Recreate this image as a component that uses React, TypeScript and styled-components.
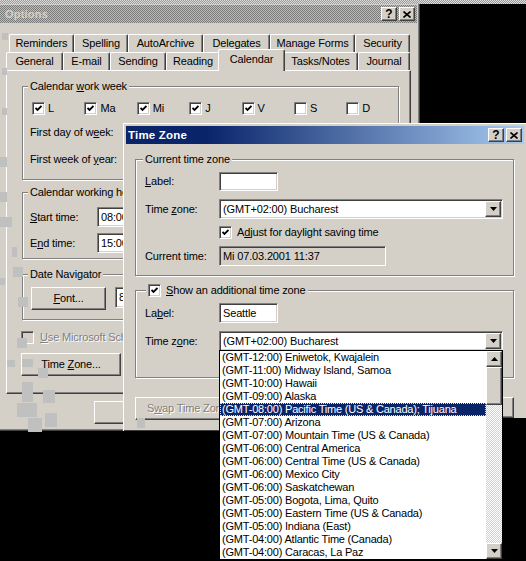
import React from "react";
import styled, { createGlobalStyle, css } from "styled-components";

const face = "#d4d0c8";
const shadow = "#808080";
const dark = "#404040";

const GlobalStyle = createGlobalStyle`
  html, body { margin: 0; padding: 0; background: #000; }
  * { box-sizing: border-box; }
`;

const checker = (a: string, b: string) => css`
  background-image: repeating-conic-gradient(${a} 0 25%, ${b} 0 50%);
  background-size: 2px 2px;
`;

const raised = css`
  border: 1px solid;
  border-color: #fff ${dark} ${dark} #fff;
  box-shadow: inset -1px -1px ${shadow};
  background: ${face};
`;

const sunken = css`
  border: 1px solid;
  border-color: ${shadow} #fff #fff ${shadow};
  box-shadow: inset 1px 1px ${dark}, inset -1px -1px ${face};
`;

const Screen = styled.div`
  position: relative;
  width: 526px;
  height: 561px;
  overflow: hidden;
  background: #000;
  font-family: "Liberation Sans", Arial, sans-serif;
  font-size: 11px;
  line-height: 13px;
  letter-spacing: -0.15px;
  color: #000;
`;

const BackStrip = styled.div`
  height: 4px;
  ${checker("#9a9a9a", "#dcdcdc")}
`;

const OptionsWindow = styled.div`
  display: flex;
  flex-direction: column;
  width: 420px;
  height: 427px;
  background: ${face};
  box-shadow: inset -1px -1px ${dark}, inset -2px -2px ${shadow};
`;

const TitleBar = styled.div<{ $active?: boolean }>`
  display: flex;
  align-items: center;
  flex: none;
  height: 18px;
  padding: 0 2px 0 5px;
  font-weight: bold;
  letter-spacing: 0.2px;
  ${(p) =>
    p.$active
      ? css`
          background: linear-gradient(90deg, #0a246a 0%, #0a246a 20%, #a6caf0 100%);
          color: #fff;
        `
      : css`
          ${checker("#7a7a7a", "#bdbdbd")}
          color: ${face};
        `}
`;

const OptionsTitle = styled(TitleBar)`
  margin: 1px 3px 0 0;
`;

const TitleButtons = styled.div`
  display: flex;
  gap: 2px;
  margin-left: auto;
`;

const TitleButton = styled.div`
  ${raised}
  width: 16px;
  height: 14px;
  display: flex;
  align-items: center;
  justify-content: center;
  color: #000;
  font-size: 12px;
  font-weight: bold;
`;

const OptionsBody = styled.div`
  display: flex;
  flex-direction: column;
  padding: 11px 0 0 6px;
`;

const TabRow = styled.div<{ $indent: number }>`
  display: flex;
  height: 18px;
  margin-left: ${(p) => p.$indent}px;
`;

const Tab = styled.div<{ $w: number; $selected?: boolean }>`
  flex: none;
  width: ${(p) => p.$w}px;
  height: 18px;
  display: flex;
  align-items: center;
  justify-content: center;
  padding-bottom: 1px;
  background: ${face};
  border-top: 1px solid #fff;
  border-left: 1px solid #fff;
  border-right: 1px solid ${dark};
  border-radius: 2px 2px 0 0;
  box-shadow: inset -1px 0 ${shadow};
  white-space: nowrap;
  ${(p) =>
    p.$selected &&
    css`
      position: relative;
      z-index: 1;
      width: ${p.$w + 4}px;
      height: 22px;
      margin: -3px -2px -1px;
      padding-bottom: 3px;
    `}
`;

const Panel = styled.div`
  display: flex;
  flex-direction: column;
  align-items: flex-start;
  width: 405px;
  height: 324px;
  padding: 15px 0 0 15px;
  border: 1px solid;
  border-color: #fff ${dark} ${dark} #fff;
  box-shadow: inset -1px -1px ${shadow};
`;

const Group = styled.div<{ $w: number; $h: number; $mt?: number }>`
  position: relative;
  flex: none;
  width: ${(p) => p.$w}px;
  height: ${(p) => p.$h}px;
  margin-top: ${(p) => p.$mt ?? 0}px;
  border: 1px solid ${shadow};
  box-shadow: inset 1px 1px #fff, 1px 1px #fff;
`;

const Legend = styled.div<{ $left: number }>`
  position: absolute;
  top: -7px;
  left: ${(p) => p.$left}px;
  display: flex;
  align-items: center;
  gap: 5px;
  padding: 0 2px;
  background: ${face};
  white-space: nowrap;
`;

const U = styled.span`
  text-decoration: underline;
  text-underline-offset: 1px;
`;

const Disabled = styled.span`
  color: ${shadow};
  text-shadow: 1px 1px #fff;
`;

const CheckBox = styled.span<{ $disabled?: boolean }>`
  ${sunken}
  flex: none;
  display: inline-flex;
  align-items: center;
  justify-content: center;
  width: 13px;
  height: 13px;
  background: ${(p) => (p.$disabled ? face : "#fff")};
`;

const Check = ({ on, disabled }: { on?: boolean; disabled?: boolean }) => (
  <CheckBox $disabled={disabled}>
    {on && (
      <svg width="7" height="7" viewBox="0 0 7 7">
        <path d="M0.5 3 L2.5 5 L6.5 1" stroke="#000" strokeWidth="1.8" fill="none" />
      </svg>
    )}
  </CheckBox>
);

const CheckItem = styled.label<{ $gap?: number }>`
  display: flex;
  align-items: center;
  gap: ${(p) => p.$gap ?? 3}px;
  white-space: nowrap;
`;

const DayRow = styled.div`
  display: grid;
  grid-template-columns: repeat(7, 52.4px);
  height: 13px;
  margin: 15px 0 0 9px;
`;

const FieldRows = styled.div<{ $top: number; $gap: number; $h: number }>`
  display: grid;
  grid-auto-rows: ${(p) => p.$h}px;
  row-gap: ${(p) => p.$gap}px;
  padding: ${(p) => p.$top}px 0 0 7px;
`;

const FieldRow = styled.div`
  display: grid;
  grid-template-columns: 67px auto;
  align-items: center;
  white-space: nowrap;
`;

const TextBox = styled.div<{ $w: number; $h?: number; $grey?: boolean }>`
  ${sunken}
  width: ${(p) => p.$w}px;
  height: ${(p) => p.$h ?? 20}px;
  padding: 0 3px;
  display: flex;
  align-items: center;
  white-space: nowrap;
  overflow: hidden;
  background: ${(p) => (p.$grey ? face : "#fff")};
`;

const Button = styled.div<{ $w: number; $h?: number }>`
  ${raised}
  flex: none;
  width: ${(p) => p.$w}px;
  height: ${(p) => p.$h ?? 23}px;
  display: flex;
  align-items: center;
  justify-content: center;
  white-space: nowrap;
  box-shadow: inset -1px -1px ${shadow}, inset 1px 1px ${face};
`;

const NavRow = styled.div`
  display: flex;
  align-items: flex-start;
  gap: 9px;
  padding: 12px 0 0 8px;
`;

const SoloCheck = styled(CheckItem)`
  margin: 11px 0 0 -1px;
  height: 13px;
`;

const TimeZoneButton = styled(Button)`
  margin: 9px 0 0 -1px;
`;

const DialogButtons = styled.div`
  display: flex;
  gap: 6px;
  padding: 7px 0 0 88px;
`;

/* ---- Time Zone dialog ---- */

const Dialog = styled.div`
  position: absolute;
  left: 123px;
  top: 123px;
  width: 404px;
  height: 308px;
  display: flex;
  flex-direction: column;
  padding: 3px 3px 0;
  background: ${face};
  box-shadow: inset 1px 1px #fff, inset -1px -1px ${dark};
`;

/* the capture lost the lower right corner of the dialog */
const CaptureGap = styled.div`
  position: absolute;
  left: 503px;
  top: 418px;
  width: 23px;
  height: 14px;
  background: #000;
`;

const DialogTitle = styled(TitleBar)`
  padding-left: 2px;
  font-size: 11.5px;
`;

const DialogBody = styled.div`
  display: flex;
  flex-direction: column;
  padding: 15px 0 0 9px;
`;

const TzRows = styled.div<{ $rows: string; $top: number; $gap: number }>`
  display: grid;
  grid-template-columns: 74px auto;
  grid-template-rows: ${(p) => p.$rows};
  row-gap: ${(p) => p.$gap}px;
  align-items: center;
  padding: ${(p) => p.$top}px 0 0 9px;
  white-space: nowrap;
`;

const Span2 = styled.div`
  grid-column: 2;
`;

const SelectWrap = styled.div`
  position: relative;
  width: 284px;
  height: 20px;
`;

const SelectBox = styled(TextBox)`
  padding-right: 1px;
  justify-content: space-between;
`;

const ArrowButton = styled.div`
  ${raised}
  width: 16px;
  height: 16px;
  flex: none;
  display: flex;
  align-items: center;
  justify-content: center;
  box-shadow: inset -1px -1px ${shadow}, inset 1px 1px ${face};
`;

const Arrow = ({ up }: { up?: boolean }) => (
  <svg width="7" height="4" viewBox="0 0 7 4">
    <path d={up ? "M3.5 0 L7 4 L0 4 Z" : "M0 0 L7 0 L3.5 4 Z"} fill="#000" />
  </svg>
);

const Select = ({ value }: { value: string }) => (
  <SelectBox $w={284}>
    <span>{value}</span>
    <ArrowButton>
      <Arrow />
    </ArrowButton>
  </SelectBox>
);

const DropList = styled.div`
  position: absolute;
  left: 0;
  top: 19px;
  z-index: 5;
  display: flex;
  width: 284px;
  height: 210px;
  border: 1px solid #000;
  background: #fff;
`;

const Items = styled.div`
  flex: 1;
  display: flex;
  flex-direction: column;
  letter-spacing: -0.2px;
`;

const Item = styled.div<{ $selected?: boolean }>`
  height: 13px;
  line-height: 13px;
  padding-left: 2px;
  white-space: nowrap;
  overflow: hidden;
  ${(p) =>
    p.$selected &&
    css`
      background: #0a246a;
      color: #fff;
      outline: 1px dotted #e8e890;
      outline-offset: -1px;
    `}
`;

const ScrollBar = styled.div`
  width: 16px;
  display: flex;
  flex-direction: column;
`;

const Thumb = styled.div`
  ${raised}
  height: 38px;
  box-shadow: inset -1px -1px ${shadow}, inset 1px 1px ${face};
`;

const Track = styled.div`
  flex: 1;
  ${checker("#ffffff", face)}
`;

const TzButtons = styled.div`
  display: flex;
  justify-content: space-between;
  width: 379px;
  margin-top: 19px;
`;

const Artifacts = styled.svg`
  position: absolute;
  left: 0;
  top: 0;
  pointer-events: none;
`;

const zones = [
  "(GMT-12:00) Eniwetok, Kwajalein",
  "(GMT-11:00) Midway Island, Samoa",
  "(GMT-10:00) Hawaii",
  "(GMT-09:00) Alaska",
  "(GMT-08:00) Pacific Time (US & Canada); Tijuana",
  "(GMT-07:00) Arizona",
  "(GMT-07:00) Mountain Time (US & Canada)",
  "(GMT-06:00) Central America",
  "(GMT-06:00) Central Time (US & Canada)",
  "(GMT-06:00) Mexico City",
  "(GMT-06:00) Saskatchewan",
  "(GMT-05:00) Bogota, Lima, Quito",
  "(GMT-05:00) Eastern Time (US & Canada)",
  "(GMT-05:00) Indiana (East)",
  "(GMT-04:00) Atlantic Time (Canada)",
  "(GMT-04:00) Caracas, La Paz",
];

const topTabs: [string, number][] = [
  ["Reminders", 65],
  ["Spelling", 54],
  ["AutoArchive", 75],
  ["Delegates", 67],
  ["Manage Forms", 85],
  ["Security", 55],
];

const frontTabs: [string, number][] = [
  ["General", 57],
  ["E-mail", 47],
  ["Sending", 56],
  ["Reading", 54],
  ["Calendar", 63],
  ["Tasks/Notes", 75],
  ["Journal", 52],
];

const days: [string, boolean][] = [
  ["L", true],
  ["Ma", true],
  ["Mi", true],
  ["J", true],
  ["V", true],
  ["S", false],
  ["D", false],
];

const trails: [number, number, number, number][] = [
  [2, 33, 6, 7], [2, 68, 5, 7], [2, 108, 5, 7], [0, 157, 7, 10], [0, 192, 7, 10],
  [0, 217, 12, 10], [12, 247, 5, 10], [13, 267, 10, 10], [0, 278, 5, 7],
  [18, 297, 10, 10], [17, 338, 10, 10], [7, 360, 8, 7], [22, 359, 11, 8],
  [38, 368, 10, 10], [22, 382, 11, 20], [43, 390, 12, 13], [17, 403, 20, 14],
  [28, 418, 14, 14], [45, 413, 12, 14], [137, 418, 8, 10],
];

const CloseGlyph = () => (
  <svg width="8" height="7" viewBox="0 0 8 7">
    <path d="M0.5 0.5 L7.5 6.5 M7.5 0.5 L0.5 6.5" stroke="#000" strokeWidth="1.6" />
  </svg>
);

const App = () => {
  return (
    <>
      <GlobalStyle />
      <Screen>
        <BackStrip />
        <OptionsWindow>
          <OptionsTitle>
            Options
            <TitleButtons>
              <TitleButton>?</TitleButton>
              <TitleButton>
                <CloseGlyph />
              </TitleButton>
            </TitleButtons>
          </OptionsTitle>
          <OptionsBody>
            <TabRow $indent={3}>
              {topTabs.map(([t, w]) => (
                <Tab key={t} $w={w}>
                  {t}
                </Tab>
              ))}
            </TabRow>
            <TabRow $indent={0}>
              {frontTabs.map(([t, w]) => (
                <Tab key={t} $w={w} $selected={t === "Calendar"}>
                  {t}
                </Tab>
              ))}
            </TabRow>
            <Panel>
              <Group $w={377} $h={94}>
                <Legend $left={5}>
                  <span>
                    Calendar <U>w</U>ork week
                  </span>
                </Legend>
                <DayRow>
                  {days.map(([d, on]) => (
                    <CheckItem key={d}>
                      <Check on={on} />
                      {d}
                    </CheckItem>
                  ))}
                </DayRow>
                <FieldRows $top={7} $gap={6} $h={21}>
                  <FieldRow>
                    <span>
                      First day of w<U>e</U>ek:
                    </span>
                  </FieldRow>
                  <FieldRow>
                    <span>
                      First week of <U>y</U>ear:
                    </span>
                  </FieldRow>
                </FieldRows>
              </Group>
              <Group $w={377} $h={67} $mt={12}>
                <Legend $left={5}>Calendar working hours</Legend>
                <FieldRows $top={14} $gap={6} $h={20}>
                  <FieldRow>
                    <span>
                      <U>S</U>tart time:
                    </span>
                    <TextBox $w={80}>08:00</TextBox>
                  </FieldRow>
                  <FieldRow>
                    <span>
                      E<U>n</U>d time:
                    </span>
                    <TextBox $w={80}>15:00</TextBox>
                  </FieldRow>
                </FieldRows>
              </Group>
              <Group $w={377} $h={46} $mt={15}>
                <Legend $left={5}>Date Navigator</Legend>
                <NavRow>
                  <Button $w={75}>
                    <span>
                      <U>F</U>ont...
                    </span>
                  </Button>
                  <TextBox $w={120} $h={21}>
                    8 pt. Tahoma
                  </TextBox>
                </NavRow>
              </Group>
              <SoloCheck $gap={6}>
                <Check disabled />
                <Disabled>
                  <U>U</U>se Microsoft Schedule+ as my primary calendar
                </Disabled>
              </SoloCheck>
              <TimeZoneButton $w={100}>
                <span>
                  Time <U>Z</U>one...
                </span>
              </TimeZoneButton>
            </Panel>
            <DialogButtons>
              <Button $w={75}>OK</Button>
              <Button $w={75}>Cancel</Button>
              <Button $w={75}>Apply</Button>
            </DialogButtons>
          </OptionsBody>
        </OptionsWindow>

        <Dialog>
          <DialogTitle $active>
            Time Zone
            <TitleButtons>
              <TitleButton>?</TitleButton>
              <TitleButton>
                <CloseGlyph />
              </TitleButton>
            </TitleButtons>
          </DialogTitle>
          <DialogBody>
            <Group $w={379} $h={117}>
              <Legend $left={7}>Current time zone</Legend>
              <TzRows $rows="21px 20px 13px 20px" $top={11} $gap={7}>
                <span>
                  <U>L</U>abel:
                </span>
                <TextBox $w={59} $h={19} />
                <span>
                  Time <U>z</U>one:
                </span>
                <Select value="(GMT+02:00) Bucharest" />
                <Span2>
                  <CheckItem $gap={5}>
                    <Check on />
                    <span>
                      A<U>d</U>just for daylight saving time
                    </span>
                  </CheckItem>
                </Span2>
                <span>Current time:</span>
                <TextBox $w={167} $grey>
                  Mi 07.03.2001 11:37
                </TextBox>
              </TzRows>
            </Group>
            <Group $w={379} $h={88} $mt={14}>
              <Legend $left={10}>
                <Check on />
                <span>
                  <U>S</U>how an additional time zone
                </span>
              </Legend>
              <TzRows $rows="20px 20px" $top={12} $gap={8}>
                <span>
                  La<U>b</U>el:
                </span>
                <TextBox $w={59}>Seattle</TextBox>
                <span>
                  Time z<U>o</U>ne:
                </span>
                <SelectWrap>
                  <Select value="(GMT+02:00) Bucharest" />
                  <DropList>
                    <Items>
                      {zones.map((z, i) => (
                        <Item key={z} $selected={i === 4}>
                          {z}
                        </Item>
                      ))}
                    </Items>
                    <ScrollBar>
                      <ArrowButton>
                        <Arrow up />
                      </ArrowButton>
                      <Thumb />
                      <Track />
                      <ArrowButton>
                        <Arrow />
                      </ArrowButton>
                    </ScrollBar>
                  </DropList>
                </SelectWrap>
              </TzRows>
            </Group>
            <TzButtons>
              <Button $w={110}>
                <Disabled>
                  S<U>w</U>ap Time Zones
                </Disabled>
              </Button>
              <Button $w={75} $h={21}>
                OK
              </Button>
            </TzButtons>
          </DialogBody>
        </Dialog>
        <CaptureGap />

        <Artifacts width="160" height="440">
          {trails.map(([x, y, w, h], i) => (
            <rect key={i} x={x} y={y} width={w} height={h} fill="#c0c0c0" />
          ))}
        </Artifacts>
      </Screen>
    </>
  );
};

export default App;
